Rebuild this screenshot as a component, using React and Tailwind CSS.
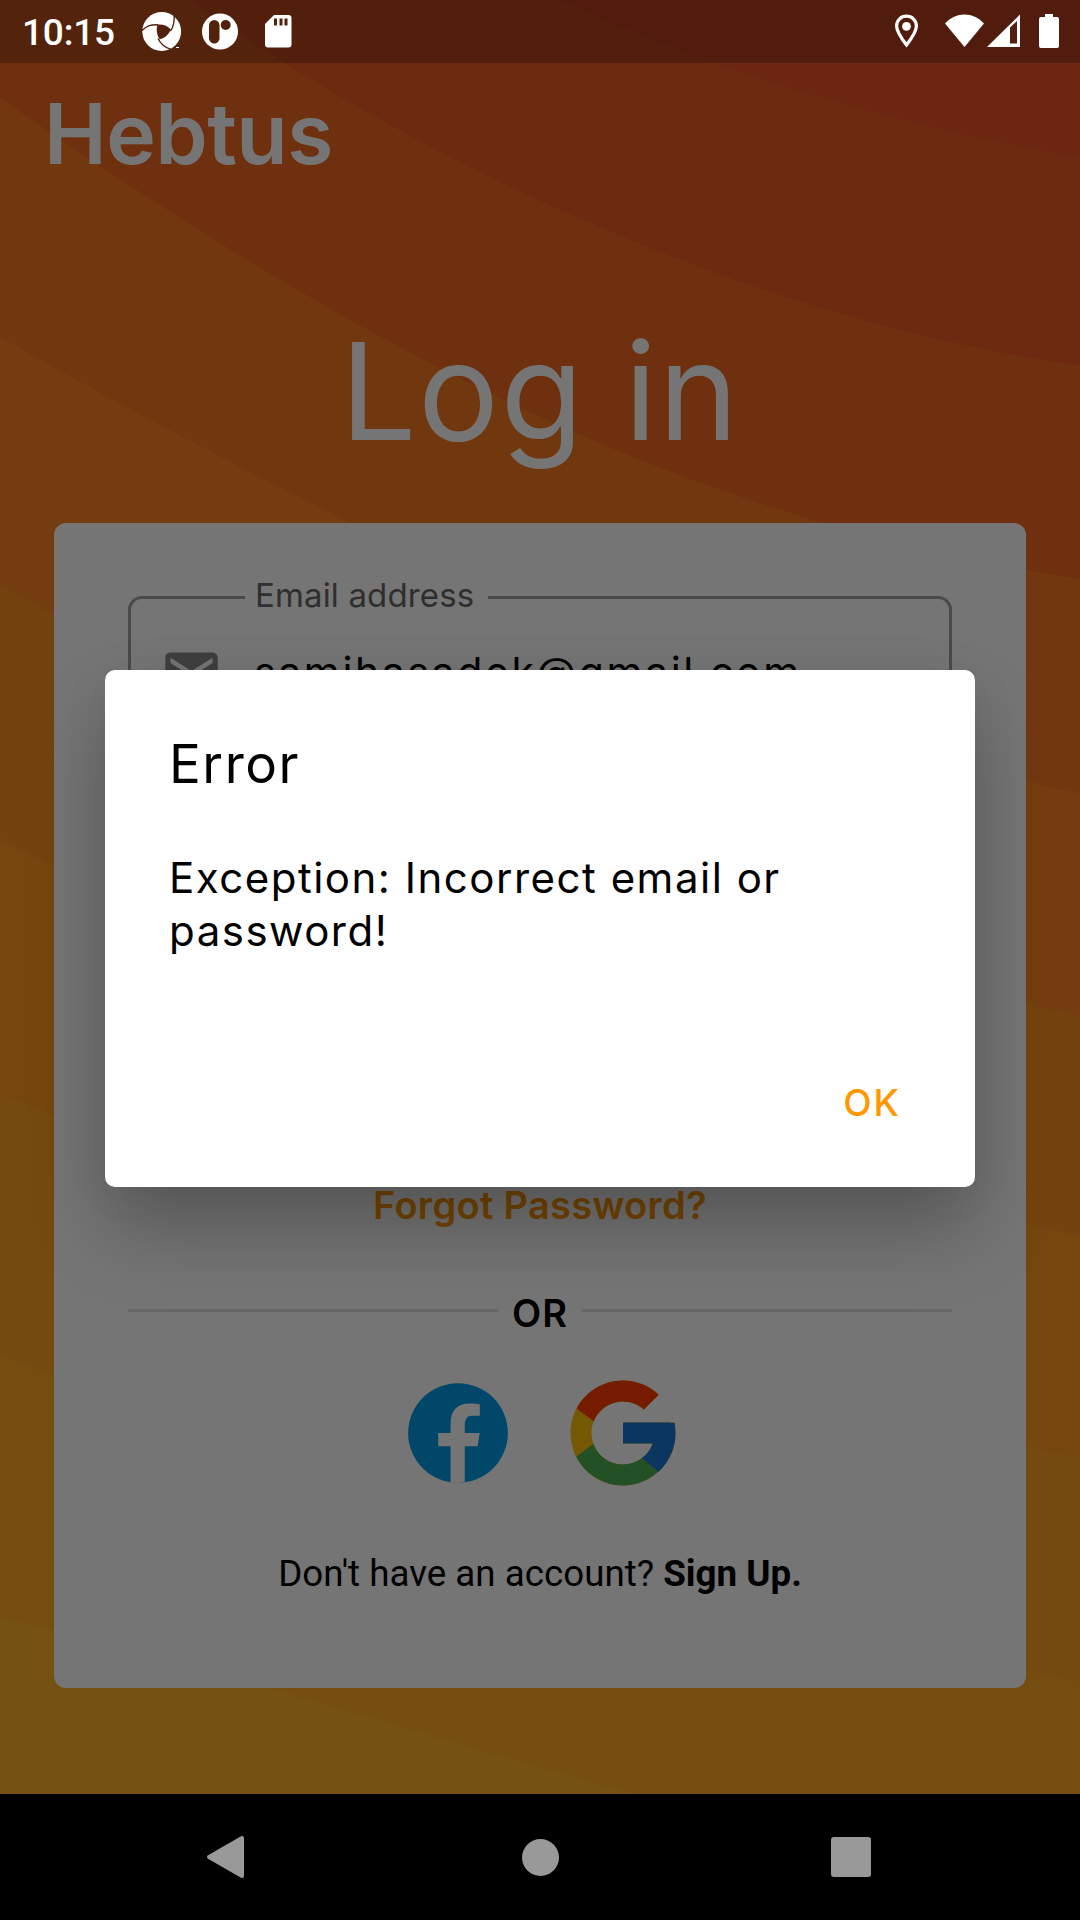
import React from "react";

// Painted from the bottom of the screen upwards; each wave covers everything above its curve.
const WAVES = [
  { fill: "#fea826", d: "M0 0V1618C210 1665 420 1735 634 1794H1080V0Z" },
  { fill: "#fea224", d: "M0 0V1355C330 1480 700 1610 1080 1682V0Z" },
  { fill: "#fe9a20", d: "M0 0V1093C330 1240 700 1385 1080 1457V0Z" },
  { fill: "#fc9020", d: "M0 0V839C330 1010 700 1150 1080 1237V0Z" },
  { fill: "#fa8522", d: "M0 0V585C330 770 700 930 1080 1016V0Z" },
  { fill: "#f67b22", d: "M0 0V337C330 525 720 710 1080 794V0Z" },
  { fill: "#f37221", d: "M0 0V98C300 305 640 515 1080 579V0Z" },
  { fill: "#f16a21", d: "M0 0V98C300 305 640 515 1080 579V0Z" },
  { fill: "#ed5c23", d: "M190 0C430 170 760 320 1080 366V0Z" },
  { fill: "#eb5328", d: "M560 0C720 75 900 125 1080 158V0Z" },
];

function Background() {
  return (
    <svg className="bg-[#feb02c] [grid-area:1/1]" width="1080" height="1794" viewBox="0 0 1080 1794">
      {WAVES.map((w) => (
        <path key={w.fill} d={w.d} fill={w.fill} />
      ))}
    </svg>
  );
}

function StatusBar() {
  return (
    <header className="[grid-area:1/1] z-20 flex h-[63px] items-start bg-black/25 text-white">
      <span className="ml-[22px] mt-[12px] w-[94px] whitespace-nowrap font-['Roboto',sans-serif] text-[37px] font-medium leading-[42px] tracking-[-0.2px]">
        10:15
      </span>
      <svg className="ml-[24px] mt-[10px]" width="44" height="44" viewBox="140 10 44 44">
        <circle cx="161.7" cy="31.5" r="19.4" fill="#fff" />
        <g stroke="#52220d" fill="none" strokeWidth="1.4">
          <path d="M142 30.500C147 25.500 151 24.500 158 24.700" />
          <path d="M170.500 31C173.500 27 174.500 22 174.200 15" />
          <path d="M158 38.500C160.500 44 164 47 171 49.500" />
        </g>
        <path d="M157.500 24.500C163 24 168 26 170.800 29.500C169 34 165 38.300 159.500 39.300C156.500 34 156 29.500 157.500 24.500Z" fill="#52220d" />
        <path d="M176 47.500h3" stroke="#fff" />
      </svg>
      <svg className="ml-[16px] mt-[12px]" width="40" height="40" viewBox="200 12 40 40">
        <circle cx="220" cy="31.500" r="18" fill="#fff" />
        <rect x="209" y="20" width="10.500" height="23.500" rx="5.250" fill="#52220d" />
        <circle cx="225.700" cy="25" r="5" fill="#52220d" />
      </svg>
      <svg className="ml-[22px] mt-[12px]" width="34" height="40" viewBox="262 12 34 40">
        <path d="M274 15h14.500a3 3 0 0 1 3 3v26.500a3 3 0 0 1-3 3H268a3 3 0 0 1-3-3V24Z" fill="#fff" />
        <path d="M275.500 18.500v7M281 18.500v7M286 18.500v7" stroke="#52220d" strokeWidth="3" />
      </svg>
      <svg className="ml-auto mt-[12px]" width="30" height="38" viewBox="892 12 30 38">
        <path d="M906.500 16.200c-5.700 0-9.900 4.300-9.900 9.800 0 5.500 4.500 12 9.900 19 5.400-7 9.900-13.500 9.900-19 0-5.500-4.200-9.800-9.900-9.800Z" fill="none" stroke="#fff" strokeWidth="3.200" />
        <circle cx="906.500" cy="26.300" r="4.400" fill="#fff" />
      </svg>
      <svg className="ml-[20px] mt-[12px]" width="90" height="38" viewBox="942 12 90 38">
        <path d="M945 23.500C956 11.500 973 11.500 984 23.500L964.500 47Z" fill="#fff" />
        <path d="M1020 14.500V47H987Z" fill="#fff" />
        <path d="M1010 27.500L1017 21V43.500H1010Z" fill="#52200f" />
      </svg>
      <svg className="mr-[18px] mt-[12px]" width="30" height="38" viewBox="1032 12 30 38">
        <path d="M1045 14h8v3h4a2 2 0 0 1 2 2v27a2 2 0 0 1-2 2h-16a2 2 0 0 1-2-2V19a2 2 0 0 1 2-2h4Z" fill="#fff" />
      </svg>
    </header>
  );
}

function EmailField() {
  return (
    <div className="mx-[74px] mt-[57px] h-[160px]">
      <fieldset className="h-[160px] rounded-[14px] border-[3px] border-[#a2a2a2] pl-[30px]">
        <legend className="ml-[84px] h-[34px] w-[243px] whitespace-nowrap pl-[10px] text-[33px] leading-[31px] tracking-[0.15px] text-[#666]">
          Email address
        </legend>
        <div className="mt-[28px] flex">
          <svg width="63" height="63" viewBox="0 0 24 24" className="-ml-px shrink-0 fill-[#8a8a8a]">
            <path d="M20 4H4c-1.100 0-1.990.9-1.990 2L2 18c0 1.100.9 2 2 2h16c1.100 0 2-.9 2-2V6c0-1.100-.9-2-2-2zm0 4l-8 5-8-5V6l8 5 8-5v2z" />
          </svg>
          <span className="ml-[31px] mt-[2px] whitespace-nowrap text-[41px] leading-[56px] tracking-[2.6px] text-black">
            samihasadek@gmail.com
          </span>
        </div>
      </fieldset>
    </div>
  );
}

function SocialButtons() {
  return (
    <div className="mt-[32px] flex justify-center gap-[39px]">
      <svg width="126" height="126" viewBox="0 0 48 48">
        <path fill="#039be5" d="M24 5A19 19 0 1 0 24 43A19 19 0 1 0 24 5Z" />
        <path fill="#fff" d="M26.572 29.036h4.917l.772-4.995h-5.690v-2.730c0-2.075.678-3.915 2.619-3.915h3.119v-4.359c-.548-.074-1.707-.236-3.897-.236-4.573 0-7.254 2.415-7.254 7.917v3.323h-4.701v4.995h4.701v13.729C22.089 42.905 23.032 43 24 43c.875 0 1.729-.080 2.572-.194V29.036z" />
      </svg>
      <svg width="126" height="126" viewBox="0 0 48 48">
        <path fill="#FFC107" d="M43.611 20.083H42V20H24v8h11.303c-1.649 4.657-6.080 8-11.303 8-6.627 0-12-5.373-12-12s5.373-12 12-12c3.059 0 5.842 1.154 7.961 3.039l5.657-5.657C34.046 6.053 29.268 4 24 4 12.955 4 4 12.955 4 24s8.955 20 20 20 20-8.955 20-20c0-1.341-.138-2.650-.389-3.917z" />
        <path fill="#FF3D00" d="M6.306 14.691l6.571 4.819C14.655 15.108 18.961 12 24 12c3.059 0 5.842 1.154 7.961 3.039l5.657-5.657C34.046 6.053 29.268 4 24 4 16.318 4 9.656 8.337 6.306 14.691z" />
        <path fill="#4CAF50" d="M24 44c5.166 0 9.860-1.977 13.409-5.192l-6.190-5.238C29.211 35.091 26.715 36 24 36c-5.202 0-9.619-3.317-11.283-7.946l-6.522 5.025C9.505 39.556 16.227 44 24 44z" />
        <path fill="#1976D2" d="M43.611 20.083H42V20H24v8h11.303a12.040 12.040 0 0 1-4.087 5.571l6.193 5.238C36.971 39.205 44 34 44 24c0-1.341-.138-2.650-.389-3.917z" />
      </svg>
    </div>
  );
}

function LoginPage() {
  return (
    <main className="[grid-area:1/1] flex h-[1794px] flex-col">
      <div className="ml-[44px] mt-[84px] h-[100px] whitespace-nowrap text-[84px] font-semibold leading-[100px] tracking-[-0.5px] text-white">
        Hebtus
      </div>
      <h1 className="mt-[127px] h-[160px] whitespace-nowrap text-center text-[135px] font-normal leading-[160px] tracking-[1.500px] text-white">
        Log in
      </h1>
      <section className="mx-[54px] mt-[52px] flex h-[1165px] flex-col rounded-[12px] bg-white">
        <EmailField />
        <a className="mt-[440px] h-[50px] whitespace-nowrap text-center text-[38px] font-semibold leading-[50px] tracking-[0.3px] text-[#ff9800]">
          Forgot Password?
        </a>
        <div className="mx-[74px] mt-[58px] flex h-[50px] items-center gap-[13px]">
          <span className="-mt-[6px] h-[3px] flex-1 bg-[#e0e0e0]" />
          <span className="w-[58px] text-center text-[38px] font-semibold leading-[50px] tracking-[1px] text-black">OR</span>
          <span className="-mt-[6px] h-[3px] flex-1 bg-[#e0e0e0]" />
        </div>
        <SocialButtons />
        <p className="mt-[53px] whitespace-nowrap text-center font-['Roboto',sans-serif] text-[36.750px] leading-[50px] text-black">
          Don't have an account? <b className="font-bold">Sign Up.</b>
        </p>
      </section>
    </main>
  );
}

function ErrorDialog() {
  return (
    <div className="[grid-area:1/1] z-10 flex h-[1794px] items-start justify-center bg-black/54 pt-[670px]">
      <div className="flex h-[517px] w-[870px] flex-col rounded-[10px] bg-white px-[64px] text-black shadow-[0_44px_80px_-4px_rgba(0,0,0,0.26),0_4px_50px_0_rgba(0,0,0,0.05)]">
        <h2 className="mt-[64px] h-[60px] text-[53px] font-normal leading-[60px] tracking-[1.5px]">Error</h2>
        <p className="mt-[57px] w-[740px] text-[42px] leading-[53px] tracking-[1.5px]">
          Exception: Incorrect email or
          <br />
          password!
        </p>
        <button className="mr-[10px] mt-[121px] self-end text-[37px] font-[450] leading-[50px] tracking-[2px] text-[#ff9800]">
          OK
        </button>
      </div>
    </div>
  );
}

function NavigationBar() {
  return (
    <nav className="flex h-[126px] items-center justify-between bg-black pl-[205px] pr-[209px]">
      <svg width="42" height="46" viewBox="0 0 42 46">
        <path d="M4 23L37 4V42Z" fill="#999" stroke="#999" strokeWidth="4" strokeLinejoin="round" />
      </svg>
      <span className="ml-[15px] size-[37px] rounded-full bg-[#999]" />
      <span className="ml-[13px] size-[40px] rounded-[3px] bg-[#999]" />
    </nav>
  );
}

export default function App() {
  return (
    <div className="h-[1920px] w-[1080px] overflow-hidden bg-black font-['Inter',sans-serif]">
      <div className="grid h-[1794px] grid-cols-[1080px] grid-rows-[1794px]">
        <Background />
        <LoginPage />
        <ErrorDialog />
        <StatusBar />
      </div>
      <NavigationBar />
    </div>
  );
}
